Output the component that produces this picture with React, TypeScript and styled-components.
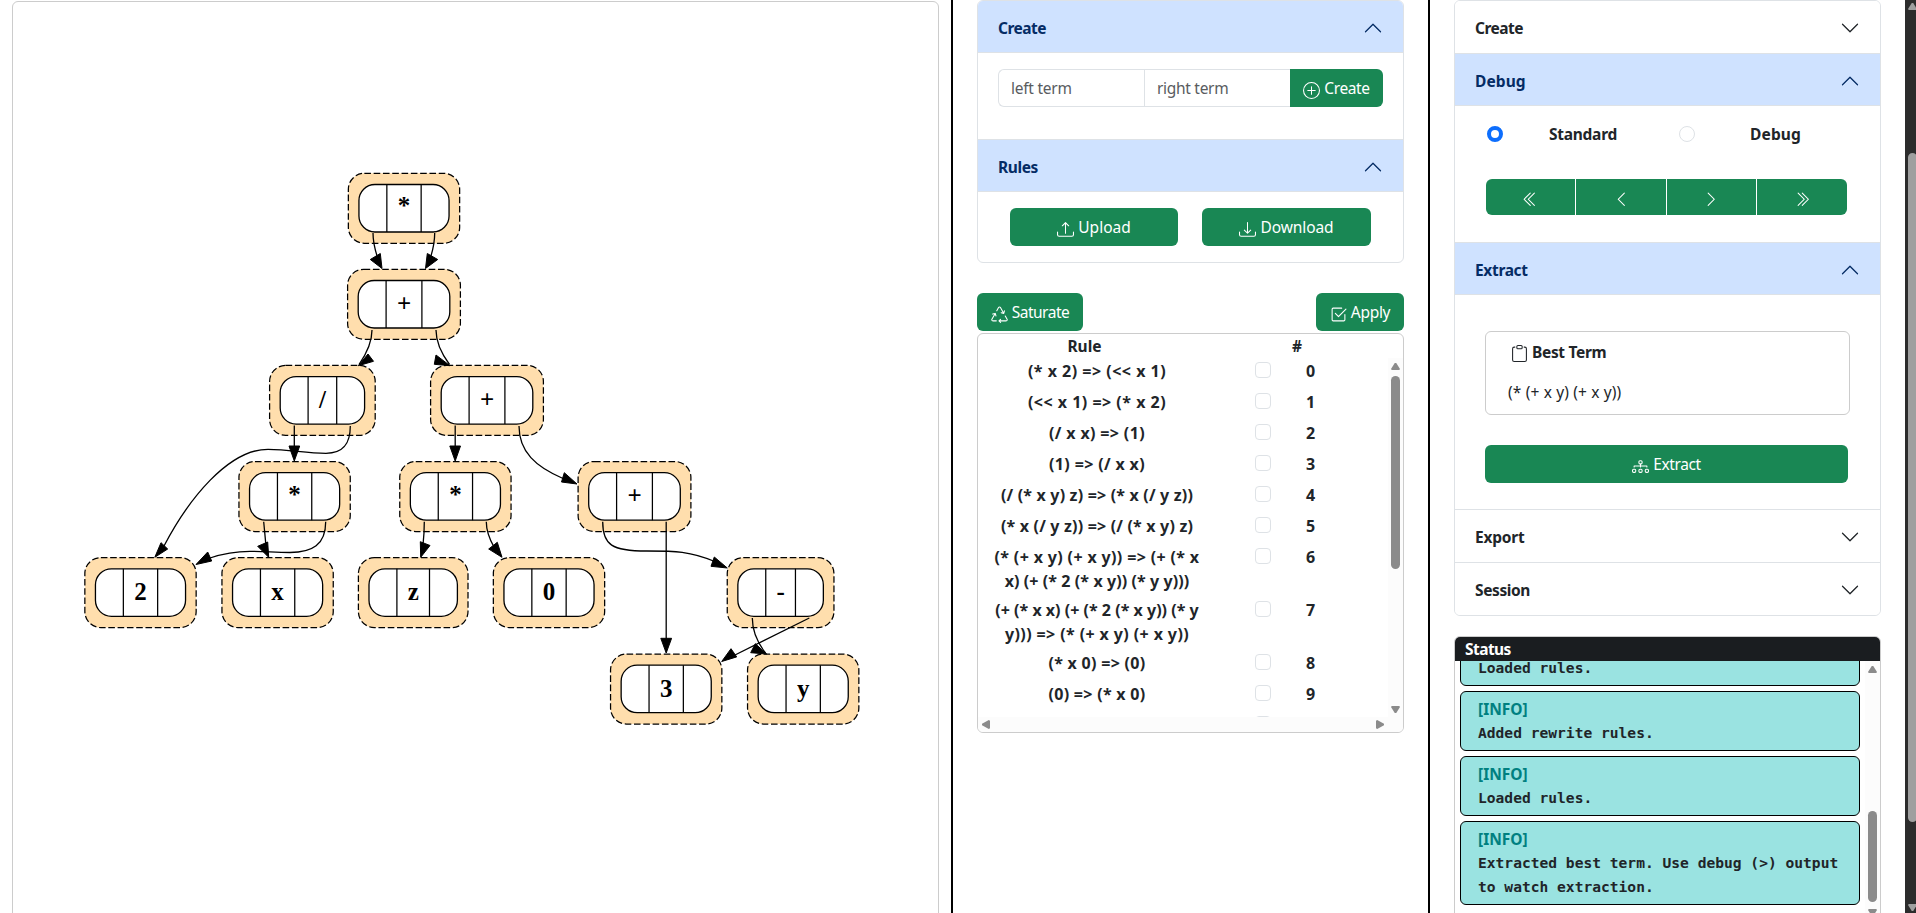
import React from 'react';
import styled, { createGlobalStyle, css } from 'styled-components';
import {
  BsPlusCircle,
  BsUpload,
  BsDownload,
  BsRecycle,
  BsCheck2Square,
  BsChevronDown,
  BsChevronLeft,
  BsChevronRight,
  BsChevronDoubleLeft,
  BsChevronDoubleRight,
  BsClipboard,
  BsDiagram3,
} from 'react-icons/bs';

const GlobalStyle = createGlobalStyle`
  * { box-sizing: border-box; }
  body {
    margin: 0;
    background: #fff;
    color: #212529;
    font-family: 'Noto Sans', 'Open Sans', sans-serif;
    font-size: 15.5px;
    line-height: 24px;
    overflow: hidden;
  }
`;

/* ---------- page frame ---------- */

const Page = styled.div`
  display: grid;
  grid-template-columns: 951px 477px 477px 11px;
  height: 913px;
  overflow: hidden;
`;

const GraphColumn = styled.main`
  padding: 1px 12px 0;
  overflow: hidden;
`;

const GraphCard = styled.div`
  height: 960px;
  border: 1px solid #ccc;
  border-radius: 6px;

  svg {
    display: block;
  }
`;

const Column = styled.section`
  border-left: 2px solid #000;
  padding: 0 24px;
  overflow: hidden;
`;

const Label = styled.span<{ $ls?: number }>`
  letter-spacing: ${(p) => p.$ls ?? 0}px;
  white-space: pre;
`;

/* ---------- accordion ---------- */

const Accordion = styled.div`
  border: 1px solid #dee2e6;
  border-radius: 6px;
  overflow: hidden;
`;

const AccordionItem = styled.div`
  & + & {
    border-top: 1px solid #dee2e6;
  }
`;

const AccordionHeader = styled.button<{ $open: boolean }>`
  display: flex;
  align-items: center;
  justify-content: space-between;
  width: 100%;
  height: 52px;
  padding: 1px 20px 0;
  border: 0;
  background: #fff;
  color: #212529;
  font: inherit;
  font-weight: 700;

  svg {
    width: 20px;
    height: 20px;
  }

  ${(p) =>
    p.$open &&
    css`
      background: #cfe2ff;
      color: #052c65;
      box-shadow: inset 0 -1px 0 #dee2e6;

      svg {
        transform: rotate(180deg);
      }
    `}
`;

const CreateBody = styled.div`
  display: flex;
  height: 86px;
  padding: 16px 20px 0;
`;

const RulesBody = styled.div`
  display: grid;
  grid-template-columns: 168px 169px;
  column-gap: 24px;
  height: 70px;
  padding: 16px 32px 0;
`;

const DebugBody = styled.div`
  height: 136px;
  padding: 16px 31px 0;
`;

const ExtractBody = styled.div`
  height: 214px;
  padding: 36px 30px 0;
`;

/* ---------- controls ---------- */

const Button = styled.button`
  display: flex;
  align-items: center;
  justify-content: center;
  gap: 4px;
  height: 38px;
  padding: 0 13px;
  border: 0;
  border-radius: 6px;
  background: #198754;
  color: #fff;
  font: inherit;
  white-space: nowrap;

  svg {
    width: 17px;
    height: 17px;
    margin-top: 4px;
  }
`;

const AddonButton = styled(Button)`
  width: 93px;
  border-radius: 0 6px 6px 0;
`;

const WideButton = styled(Button)`
  width: 363px;
  margin-top: 30px;
`;

const TermField = styled.div<{ $first?: boolean }>`
  width: 146px;
  height: 38px;
  padding: 6px 12px;
  border: 1px solid #dee2e6;
  border-right: 0;
  border-radius: ${(p) => (p.$first ? '6px 0 0 6px' : '0')};
  color: #595c5f;
`;

const RadioRow = styled.div`
  display: grid;
  grid-template-columns: 16px 160px 16px 16px 161px;
  align-items: center;
  height: 24px;
  padding-left: 1px;
  font-weight: 700;
  text-align: center;
`;

const Radio = styled.span<{ $on?: boolean }>`
  width: 16px;
  height: 16px;
  border-radius: 50%;
  border: ${(p) => (p.$on ? '4px solid #0d6efd' : '1px solid #dee2e6')};
`;

const StepGroup = styled.div`
  display: grid;
  grid-template-columns: 89px 90px 89px 90px;
  column-gap: 1px;
  width: 361px;
  height: 36px;
  margin-top: 33px;
  border-radius: 6px;
  overflow: hidden;
`;

const StepButton = styled.button`
  display: flex;
  align-items: center;
  justify-content: center;
  border: 0;
  padding: 4px 0 0;
  background: #198754;
  color: #fff;

  svg {
    width: 16.5px;
    height: 16.5px;
  }
`;

/* ---------- best term ---------- */

const TermCard = styled.div`
  width: 365px;
  height: 84px;
  padding: 8px 22px 0;
  border: 1px solid #ccc;
  border-radius: 6px;
`;

const TermTitle = styled.div`
  display: flex;
  align-items: center;
  gap: 4px;
  height: 24px;
  padding-left: 3px;
  font-weight: 700;

  svg {
    width: 17px;
    height: 17px;
    margin-top: 3px;
  }
`;

const TermValue = styled.div`
  margin-top: 16px;
`;

/* ---------- scrollbars ---------- */

const Arrow = styled.i<{ $dir: 'up' | 'down' | 'left' | 'right' }>`
  flex: none;
  width: ${(p) => (p.$dir === 'up' || p.$dir === 'down' ? 9 : 8)}px;
  height: ${(p) => (p.$dir === 'up' || p.$dir === 'down' ? 7 : 9)}px;
  background: #8b8b8b;
  clip-path: ${(p) =>
    ({
      up: 'polygon(42% 0, 58% 0, 100% 85%, 92% 100%, 8% 100%, 0 85%)',
      down: 'polygon(8% 0, 92% 0, 100% 15%, 58% 100%, 42% 100%, 0 15%)',
      left: 'polygon(0 42%, 85% 0, 100% 8%, 100% 92%, 85% 100%, 0 58%)',
      right: 'polygon(0 8%, 15% 0, 100% 42%, 100% 58%, 15% 100%, 0 92%)',
    })[p.$dir]};
`;

const VerticalTrack = styled.div`
  display: flex;
  flex-direction: column;
  align-items: center;
  width: 15px;
  background: #fcfcfc;
`;

const HorizontalTrack = styled.div`
  display: flex;
  align-items: center;
  justify-content: space-between;
  height: 15px;
  padding: 0 19px 0 4px;
  background: #fcfcfc;
`;

const Thumb = styled.div<{ $top: number; $height: number }>`
  flex: none;
  width: 9px;
  height: ${(p) => p.$height}px;
  margin-top: ${(p) => p.$top}px;
  border-radius: 5px;
  background: #8b8b8b;
`;

const RulesTrack = styled(VerticalTrack)`
  padding: 5px 0 4px;

  ${Arrow}:last-child {
    margin-top: auto;
  }
`;

const StatusTrack = styled(VerticalTrack)`
  padding-top: 5px;

  ${Arrow}:last-child {
    margin-top: 7px;
  }
`;

const PageTrack = styled.aside`
  display: flex;
  flex-direction: column;
  padding: 3px 0 2px 3px;
  background: #2c2c2c;
  overflow: hidden;

  ${Arrow} {
    width: 9px;
    background: #9f9f9f;
  }

  ${Arrow}:last-child {
    margin-top: auto;
  }
`;

const PageThumb = styled(Thumb)`
  background: #9f9f9f;
`;

/* ---------- rules table ---------- */

const ActionBar = styled.div`
  display: flex;
  justify-content: space-between;
  margin-top: 30px;
`;

const SaturateButton = styled(Button)`
  width: 106px;
`;

const ApplyButton = styled(Button)`
  width: 88px;
`;

const RulesBox = styled.div`
  height: 400px;
  margin-top: 2px;
  border: 1px solid #ccc;
  border-radius: 6px;
  overflow: hidden;
`;

const RulesHead = styled.div`
  display: grid;
  grid-template-columns: 213px 212px;
  height: 24px;
  font-weight: 700;
  text-align: center;
`;

const RulesScroller = styled.div`
  display: grid;
  grid-template-columns: 410px 15px;
  height: 359px;
`;

const RuleList = styled.div`
  height: 359px;
  overflow: hidden;
`;

const RuleRow = styled.div`
  display: grid;
  grid-template-columns: 238px 90px 1fr;
  align-items: start;
  min-height: 31px;
  padding: 1px 0 4px;
  font-weight: 700;
`;

const RuleText = styled.div`
  display: flex;
  flex-direction: column;
  align-items: center;
  font-size: 16px;
`;

const RuleCheck = styled.span`
  justify-self: end;
  width: 16px;
  height: 16px;
  margin: 3px 35px 0 0;
  border: 1px solid #dee2e6;
  border-radius: 4px;
  background: #fff;
`;

const RuleIndex = styled.div`
  font-size: 16px;
`;

/* ---------- status ---------- */

const StatusBox = styled.div`
  height: 330px;
  margin-top: 20px;
  border: 1px solid #ccc;
  border-radius: 6px;
  overflow: hidden;
`;

const StatusHead = styled.div`
  height: 24px;
  padding: 0 10px;
  background: #1a1d20;
  color: #fff;
  font-weight: 700;
`;

const StatusScroller = styled.div`
  display: grid;
  grid-template-columns: 1fr 15px;
  height: 300px;
`;

const MessageList = styled.div`
  display: flex;
  flex-direction: column;
  gap: 5px;
  height: 244px;
  padding: 0 5px;
  justify-content: flex-end;
  overflow: hidden;
`;

const Message = styled.div`
  flex: none;
  width: 400px;
  padding: 5px 17px;
  border: 1px solid #000;
  border-radius: 6px;
  background: #9ae3e1;
`;

const MessageLevel = styled.div`
  height: 24px;
  color: #008080;
  font-weight: 700;
`;

const MessageText = styled.div`
  font-family: 'DejaVu Sans Mono', 'Liberation Mono', monospace;
  font-size: 14.6px;
  font-weight: 700;
  line-height: 24px;
  white-space: pre;
`;

/* ---------- graph ---------- */

interface GraphNode {
  label: string;
  x: number;
  y: number;
  mid: number;
}

const nodes: GraphNode[] = [
  { label: '*', x: 404, y: 208.3, mid: 34.3 },
  { label: '+', x: 404, y: 304.3, mid: 35.8 },
  { label: '/', x: 322.4, y: 400.4, mid: 28.6 },
  { label: '+', x: 487, y: 400.4, mid: 35.8 },
  { label: '*', x: 294.6, y: 496.5, mid: 34.3 },
  { label: '*', x: 455.4, y: 496.5, mid: 34.3 },
  { label: '+', x: 634.5, y: 496.5, mid: 35.8 },
  { label: '2', x: 140.5, y: 592.6, mid: 34.3 },
  { label: 'x', x: 277.6, y: 592.6, mid: 34.3 },
  { label: 'z', x: 413.2, y: 592.6, mid: 32.6 },
  { label: '0', x: 549, y: 592.6, mid: 34.3 },
  { label: '-', x: 780.6, y: 592.6, mid: 29.7 },
  { label: '3', x: 666.2, y: 689, mid: 34.3 },
  { label: 'y', x: 803.2, y: 689, mid: 34.3 },
];

const edges: { line: string; head: string }[] = [
  { line: 'M373 233C373 243 375 250 378 259', head: '382,268.5 370.3,259.5 380.3,253.5' },
  { line: 'M434.7 233C434.7 243 433 250 430 259', head: '425.5,268.5 427.3,253.5 437.7,259.5' },
  { line: 'M372 330C372 343 367 353 359 364.5', head: '358.3,365.7 368,354 373.5,361.3' },
  { line: 'M436 330C436 343 441 353 449.5 364.5', head: '450,365.7 436,355 434.3,364.3' },
  { line: 'M294.3 425.5V447', head: '294.3,461 289,446 299.7,446' },
  {
    line: 'M350.3 426C350.3 443 344 453.3 326 453.3C305 453.3 290 449.3 268 449.3C228 449.3 188 500 164 546',
    head: '154.8,557.3 161,542.7 167.7,549',
  },
  { line: 'M455.2 425.5V447', head: '455.2,461 449.8,446 460.5,446' },
  { line: 'M519 426C519 452 536 467 563 478.5', head: '577,484 564.3,472.7 561.5,482' },
  { line: 'M263.7 521.7L266 546', head: '268.7,557.3 257.7,546.3 267.7,542' },
  {
    line: 'M325.7 521.7C325.7 545 312 552.5 290 552.5C275 552.5 265 551.3 250 551.3C235 551.3 223 553.5 210 558',
    head: '196,564.5 207.7,552 211.7,561',
  },
  { line: 'M424.3 521.7C424.3 530 424 536 423 545', head: '420.7,557.3 420.3,541.7 430,545.5' },
  { line: 'M486.3 521.7C486.3 530 489 538 494 547', head: '502,557.3 488.7,549 497.3,542.3' },
  {
    line: 'M602.7 521.7C602.7 545 612 551 646.7 551C675 551 690 551 716 562',
    head: '727.3,568 714.3,557 711,566.3',
  },
  { line: 'M666.2 521.7V640', head: '666.2,653 660.8,638.3 671.6,638.3' },
  { line: 'M752.3 618C752.3 630 757 642 765.5 653', head: '766.7,654 755.3,643.7 750.7,652.7' },
  { line: 'M809.3 618L733 656', head: '721.7,661.5 731,648.7 736.7,656.9' },
];

const labelOffset = (label: string) => (label === '*' ? 6 : 7.6);

const strokes = {
  outer: { fill: '#ffdead', stroke: '#000', strokeWidth: 1.25, strokeDasharray: '6.6 2.7' },
  inner: { fill: '#fff', stroke: '#000', strokeWidth: 1.3 },
};

function TermGraph() {
  return (
    <svg width="925" height="911" viewBox="13 2 925 911">
      {nodes.map((n, i) => {
        const inner = n.mid + 55.8;
        const outer = inner + 21.2;
        return (
          <g key={i}>
            <rect x={n.x - outer / 2} y={n.y - 35} width={outer} height={70} rx={16} {...strokes.outer} />
            <rect x={n.x - inner / 2} y={n.y - 23.8} width={inner} height={47.5} rx={16} {...strokes.inner} />
            <path
              d={`M${n.x - n.mid / 2} ${n.y - 23.8}v47.5M${n.x + n.mid / 2} ${n.y - 23.8}v47.5`}
              stroke="#000"
              strokeWidth={1.25}
            />
            <text
              x={n.x}
              y={n.y + labelOffset(n.label)}
              textAnchor="middle"
              fontFamily="'Liberation Serif', 'Times New Roman', serif"
              fontWeight={700}
              fontSize={25}
            >
              {n.label}
            </text>
          </g>
        );
      })}
      {edges.map((e, i) => (
        <g key={i}>
          <path d={e.line} fill="none" stroke="#000" strokeWidth={1.3} />
          <polygon points={e.head} stroke="#000" strokeWidth={1} />
        </g>
      ))}
    </svg>
  );
}

/* ---------- data ---------- */

const rules: { lines: [string, number][] }[] = [
  { lines: [['(* x 2) => (<< x 1)', 0.5]] },
  { lines: [['(<< x 1) => (* x 2)', 0.5]] },
  { lines: [['(/ x x) => (1)', 0.35]] },
  { lines: [['(1) => (/ x x)', 0.35]] },
  { lines: [['(/ (* x y) z) => (* x (/ y z))', 0.19]] },
  { lines: [['(* x (/ y z)) => (/ (* x y) z)', 0.19]] },
  { lines: [['(* (+ x y) (+ x y)) => (+ (* x', 0.36], ['x) (+ (* 2 (* x y)) (* y y)))', 0.09]] },
  { lines: [['(+ (* x x) (+ (* 2 (* x y)) (* y', 0.02], ['y))) => (* (+ x y) (+ x y))', 0.4]] },
  { lines: [['(* x 0) => (0)', 0.3]] },
  { lines: [['(0) => (* x 0)', 0.3]] },
];

const messages: { level?: string; text: string }[] = [
  { text: 'Loaded rules.' },
  { level: '[INFO]', text: 'Added rewrite rules.' },
  { level: '[INFO]', text: 'Loaded rules.' },
  { level: '[INFO]', text: 'Extracted best term. Use debug (>) output\nto watch extraction.' },
];

interface SectionProps {
  title: string;
  ls: number;
  open?: boolean;
  children?: React.ReactNode;
}

function Section({ title, ls, open = false, children }: SectionProps) {
  return (
    <AccordionItem>
      <AccordionHeader $open={open}>
        <Label $ls={ls}>{title}</Label>
        <BsChevronDown />
      </AccordionHeader>
      {open && children}
    </AccordionItem>
  );
}

export default function App() {
  return (
    <>
      <GlobalStyle />
      <Page>
        <GraphColumn>
          <GraphCard>
            <TermGraph />
          </GraphCard>
        </GraphColumn>

        <Column>
          <Accordion>
            <Section title="Create" ls={-0.5} open>
              <CreateBody>
                <TermField $first>
                  <Label $ls={-0.25}>left term</Label>
                </TermField>
                <TermField>
                  <Label $ls={-0.3}>right term</Label>
                </TermField>
                <AddonButton>
                  <BsPlusCircle />
                  <Label $ls={-0.4}>Create</Label>
                </AddonButton>
              </CreateBody>
            </Section>
            <Section title="Rules" ls={-0.4} open>
              <RulesBody>
                <Button>
                  <BsUpload />
                  <Label>Upload</Label>
                </Button>
                <Button>
                  <BsDownload />
                  <Label $ls={-0.07}>Download</Label>
                </Button>
              </RulesBody>
            </Section>
          </Accordion>

          <ActionBar>
            <SaturateButton>
              <BsRecycle />
              <Label $ls={-0.5}>Saturate</Label>
            </SaturateButton>
            <ApplyButton>
              <BsCheck2Square />
              <Label $ls={-0.3}>Apply</Label>
            </ApplyButton>
          </ActionBar>

          <RulesBox>
            <RulesHead>
              <div>Rule</div>
              <div>#</div>
            </RulesHead>
            <RulesScroller>
              <RuleList>
                {rules.map((rule, i) => (
                  <RuleRow key={i}>
                    <RuleText>
                      {rule.lines.map(([text, ls]) => (
                        <Label key={text} $ls={ls}>
                          {text}
                        </Label>
                      ))}
                    </RuleText>
                    <RuleCheck />
                    <RuleIndex>{i}</RuleIndex>
                  </RuleRow>
                ))}
                <RuleRow>
                  <span />
                  <RuleCheck />
                </RuleRow>
              </RuleList>
              <RulesTrack>
                <Arrow $dir="up" />
                <Thumb $top={6} $height={193} />
                <Arrow $dir="down" />
              </RulesTrack>
            </RulesScroller>
            <HorizontalTrack>
              <Arrow $dir="left" />
              <Arrow $dir="right" />
            </HorizontalTrack>
          </RulesBox>
        </Column>

        <Column>
          <Accordion>
            <Section title="Create" ls={-0.5} />
            <Section title="Debug" ls={0.1} open>
              <DebugBody>
                <RadioRow>
                  <Radio $on />
                  <Label $ls={-0.25}>Standard</Label>
                  <span />
                  <Radio />
                  <Label $ls={0.1}>Debug</Label>
                </RadioRow>
                <StepGroup>
                  <StepButton>
                    <BsChevronDoubleLeft />
                  </StepButton>
                  <StepButton>
                    <BsChevronLeft />
                  </StepButton>
                  <StepButton>
                    <BsChevronRight />
                  </StepButton>
                  <StepButton>
                    <BsChevronDoubleRight />
                  </StepButton>
                </StepGroup>
              </DebugBody>
            </Section>
            <Section title="Extract" ls={-0.33} open>
              <ExtractBody>
                <TermCard>
                  <TermTitle>
                    <BsClipboard />
                    <Label $ls={-0.33}>Best Term</Label>
                  </TermTitle>
                  <TermValue>
                    <Label $ls={0.15}>(* (+ x y) (+ x y))</Label>
                  </TermValue>
                </TermCard>
                <WideButton>
                  <BsDiagram3 />
                  <Label $ls={-0.37}>Extract</Label>
                </WideButton>
              </ExtractBody>
            </Section>
            <Section title="Export" ls={-0.2} />
            <Section title="Session" ls={-0.4} />
          </Accordion>

          <StatusBox>
            <StatusHead>
              <Label $ls={-0.55}>Status</Label>
            </StatusHead>
            <StatusScroller>
              <MessageList>
                {messages.map((m, i) => (
                  <Message key={i}>
                    {m.level && <MessageLevel>{m.level}</MessageLevel>}
                    <MessageText>{m.text}</MessageText>
                  </Message>
                ))}
              </MessageList>
              <StatusTrack>
                <Arrow $dir="up" />
                <Thumb $top={138} $height={91} />
                <Arrow $dir="down" />
              </StatusTrack>
            </StatusScroller>
          </StatusBox>
        </Column>

        <PageTrack>
          <Arrow $dir="up" />
          <PageThumb $top={143} $height={669} />
          <Arrow $dir="down" />
        </PageTrack>
      </Page>
    </>
  );
}
